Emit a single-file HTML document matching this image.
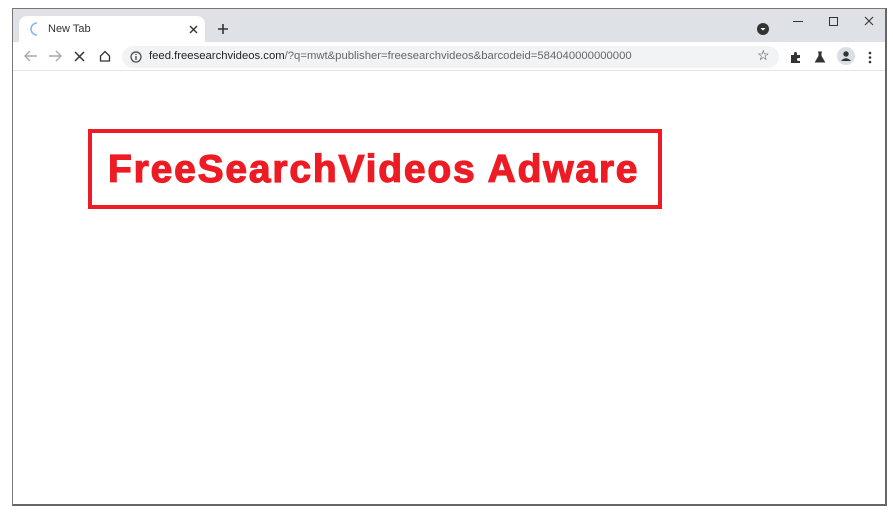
<!DOCTYPE html>
<html><head><meta charset="utf-8"><style>
*{margin:0;padding:0;box-sizing:border-box}
body{width:893px;height:512px;background:#fff;position:relative;overflow:hidden;font-family:"Liberation Sans",Arial,sans-serif}
.win{position:absolute;left:12px;top:8px;width:875px;height:498px;border:1px solid #777;border-right:2px solid #666;border-bottom:2px solid #666;background:#fff;overflow:hidden}
.tabbar{position:absolute;left:0;top:0;width:100%;height:33px;background:#dee1e6}
.tab{position:absolute;left:6px;top:7px;width:186px;height:27px;background:#fff;border-radius:8px 8px 0 0}
.tb{position:absolute;left:0;top:33px;width:100%;height:29px;background:#fff;border-bottom:1px solid #e4e4e4}
.addr{position:absolute;left:109px;top:4px;width:657px;height:22px;background:#f1f3f4;border-radius:11px}
.t{position:absolute;font-size:12px;color:#333;white-space:nowrap}
.ico{position:absolute}
.box{position:absolute;left:88px;top:129px;width:574px;height:80px;border:4px solid #ed1c24}
.big{position:absolute;left:108px;top:148px;font-size:39px;font-weight:bold;color:#ed1c24;letter-spacing:1.8px;-webkit-text-stroke:1.2px #ed1c24;white-space:nowrap}
</style></head><body>
<div class="win">
<div class="tabbar">
 <div class="tab"></div>
 <svg class="ico" style="left:16px;top:13px" width="12" height="14"><path d="M8 1 A6 6 0 0 0 8 13" stroke="#8ab4f8" stroke-width="1.6" fill="none"/></svg>
 <div class="t" style="left:35px;top:14px;font-size:11px">New Tab</div>
 <svg class="ico" style="left:176px;top:16px" width="9" height="9"><path d="M1 1L8 8M8 1L1 8" stroke="#333" stroke-width="1.4"/></svg>
 <svg class="ico" style="left:204px;top:14px" width="12" height="12"><path d="M6 1V11M1 6H11" stroke="#333" stroke-width="1.6"/></svg>
 <svg class="ico" style="left:744px;top:14px" width="12" height="12"><circle cx="6" cy="6" r="6" fill="#333"/><path d="M3.5 5L6 7.5 8.5 5Z" fill="#fff"/></svg>
 <div class="ico" style="left:780px;top:12px;width:10px;height:1px;background:#333"></div>
 <div class="ico" style="left:816px;top:8px;width:9px;height:9px;border:1px solid #333"></div>
 <svg class="ico" style="left:851px;top:7px" width="10" height="10"><path d="M1 1L9 9M9 1L1 9" stroke="#333" stroke-width="1.1"/></svg>
</div>
<div class="tb">
 <svg class="ico" style="left:11px;top:8px" width="14" height="12"><path d="M13 6H2M6 1L1 6 6 11" stroke="#aaa" stroke-width="1.4" fill="none"/></svg>
 <svg class="ico" style="left:35px;top:8px" width="14" height="12"><path d="M1 6H12M8 1L13 6 8 11" stroke="#aaa" stroke-width="1.4" fill="none"/></svg>
 <svg class="ico" style="left:61px;top:9px" width="11" height="11"><path d="M1 1L10 10M10 1L1 10" stroke="#333" stroke-width="1.5"/></svg>
 <svg class="ico" style="left:86px;top:8px" width="12" height="12"><path d="M1.5 6L6 1.5 10.5 6V11H1.5Z" stroke="#333" stroke-width="1.3" fill="none"/></svg>
 <div class="addr"></div>
 <svg class="ico" style="left:117px;top:9px" width="12" height="12"><circle cx="6" cy="6" r="5" stroke="#444" stroke-width="1.2" fill="none"/><path d="M6 5V9M6 3V4" stroke="#444" stroke-width="1.3"/></svg>
 <div class="t" style="left:136px;top:8px;font-size:11.3px"><span style="color:#222">feed.freesearchvideos.com</span><span style="color:#666">/?q=mwt&amp;publisher=freesearchvideos&amp;barcodeid=584040000000000</span></div>
 <div class="t" style="left:744px;top:5px;font-size:14px;color:#333">☆</div>
 <svg class="ico" style="left:776px;top:9px" width="13" height="13"><path d="M2 4H5V2.5A1.5 1.5 0 0 1 8 2.5V4H11V7H9.5A1.5 1.5 0 0 0 9.5 10H11V12H2Z" fill="#333"/></svg>
 <svg class="ico" style="left:801px;top:9px" width="12" height="12"><path d="M4 1H8M5 1V5L1.5 11H10.5L7 5V1" fill="#333" stroke="#333"/></svg>
 <svg class="ico" style="left:824px;top:5px" width="18" height="18"><circle cx="9" cy="9" r="9" fill="#dbdfe5"/><circle cx="9" cy="7" r="2.7" fill="#333"/><path d="M4 14Q9 8.5 14 14Z" fill="#333"/></svg>
 <svg class="ico" style="left:855px;top:9px" width="4" height="13"><circle cx="2" cy="2" r="1.3" fill="#333"/><circle cx="2" cy="6.5" r="1.3" fill="#333"/><circle cx="2" cy="11" r="1.3" fill="#333"/></svg>
</div>
</div>
<div class="box"></div>
<div class="big">FreeSearchVideos Adware</div>
</body></html>
